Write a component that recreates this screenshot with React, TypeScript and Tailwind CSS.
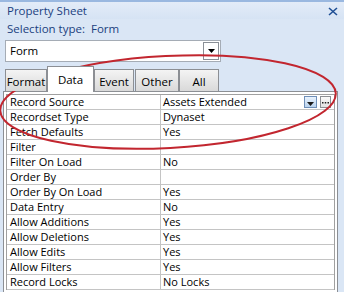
import React from "react";

const rows: [string, string][] = [
  ["Record Source", "Assets Extended"],
  ["Recordset Type", "Dynaset"],
  ["Fetch Defaults", "Yes"],
  ["Filter", ""],
  ["Filter On Load", "No"],
  ["Order By", ""],
  ["Order By On Load", "Yes"],
  ["Data Entry", "No"],
  ["Allow Additions", "Yes"],
  ["Allow Deletions", "Yes"],
  ["Allow Edits", "Yes"],
  ["Allow Filters", "Yes"],
  ["Record Locks", "No Locks"],
];

const tabs = [
  { label: "Format", cls: "w-[42px] ml-0" },
  { label: "Data", cls: "w-[47px] ml-0" },
  { label: "Event", cls: "w-[40px] ml-0" },
  { label: "Other", cls: "w-[44px] ml-[1px]" },
  { label: "All", cls: "w-[40px] ml-0" },
];

export default function App() {
  return (
    <div className="relative w-[344px] h-[292px] overflow-hidden bg-[#dae6f5] font-['Open_Sans',sans-serif] text-[11px] text-black">
      {/* title */}
      <div className="h-[19px] border-t-2 border-[#9ab8e0] bg-gradient-to-b from-[#e3ecf8] to-[#d6e3f4] flex items-center justify-between pl-[7px] pr-[6px] text-[#1b3f7e] text-[11.5px]">
        <span className="leading-none">Property Sheet</span>
        <svg width="10" height="9" viewBox="0 0 10 9" className="mt-[2px]">
          <path d="M1 1 L9 8 M9 1 L1 8" stroke="#1f4f95" strokeWidth="1.6" />
        </svg>
      </div>
      <div className="h-[19px] flex items-center pl-[7px] text-[#1b3f7e] text-[11.5px]">
        Selection type:&nbsp;&nbsp;Form
      </div>

      {/* combo */}
      <div className="mt-[2px] ml-[5px] w-[216px] h-[22px] bg-white border border-[#a5acb5] flex items-center justify-between pl-[4px] pr-[1px] text-[11.5px]">
        <span>Form</span>
        <div className="w-[16px] h-[18px] border border-[#8a8f96] bg-white flex items-center justify-center">
          <svg width="7" height="4" viewBox="0 0 7 4">
            <path d="M0 0 H7 L3.5 4 Z" fill="#000" />
          </svg>
        </div>
      </div>

      {/* tabs */}
      <div className="mt-[4px] ml-[5px] h-[25px] flex items-end relative z-10">
        {tabs.map((t) =>
          t.label === "Data" ? (
            <div
              key={t.label}
              className={`${t.cls} h-[26px] bg-white border border-b-0 border-[#8c8f94] flex items-center justify-center text-[11.5px] -mb-[1px]`}
            >
              {t.label}
            </div>
          ) : (
            <div
              key={t.label}
              className={`${t.cls} h-[22px] bg-gradient-to-b from-[#f4f4f4] to-[#d9d9d9] border border-b-0 border-[#8c8f94] flex items-center justify-center text-[11.5px] pt-[2px]`}
            >
              {t.label}
            </div>
          )
        )}
      </div>

      {/* tab page */}
      <div className="ml-[3px] w-[335px] h-[210px] bg-white border border-[#8c8f94] pt-[2px] pl-[2px]">
        <div className="w-[329px] border border-[#a0a0a0] border-b-0">
          {rows.map(([label, value], i) => (
            <div key={label} className="h-[15px] flex border-b border-[#c4c4c4]">
              <div className="w-[154px] shrink-0 border-r border-[#c4c4c4] pl-[3px] leading-[14px] whitespace-nowrap">
                {label}
              </div>
              <div className="flex-1 flex items-center justify-between pl-[2px] pr-[3px] leading-[14px] whitespace-nowrap">
                <span>{value}</span>
                {i === 0 && (
                  <div className="flex items-center gap-[3px]">
                    <div className="w-[13px] h-[12px] border border-[#6f8fb8] bg-gradient-to-b from-[#eaf3fd] to-[#b9d3ef] flex items-center justify-center">
                      <svg width="7" height="4" viewBox="0 0 7 4" className="mt-[3px]">
                        <path d="M0 0 H7 L3.5 4 Z" fill="#1a1a1a" />
                      </svg>
                    </div>
                    <div className="w-[11px] h-[12px] border border-[#8c8f94] bg-gradient-to-b from-[#fafafa] to-[#e2e2e2] flex items-end justify-center pb-[3px]">
                      <svg width="7" height="2" viewBox="0 0 7 2">
                        <rect x="0" y="0" width="1.5" height="1.5" fill="#222" />
                        <rect x="2.75" y="0" width="1.5" height="1.5" fill="#222" />
                        <rect x="5.5" y="0" width="1.5" height="1.5" fill="#222" />
                      </svg>
                    </div>
                  </div>
                )}
              </div>
            </div>
          ))}
        </div>
      </div>

      {/* annotation */}
      <svg className="absolute left-0 top-0 pointer-events-none" width="344" height="292" viewBox="0 0 344 292">
        <ellipse cx="168" cy="102" rx="168" ry="46" transform="rotate(-3 168 102)" fill="none" stroke="#c2262f" strokeWidth="2" />
      </svg>
    </div>
  );
}
